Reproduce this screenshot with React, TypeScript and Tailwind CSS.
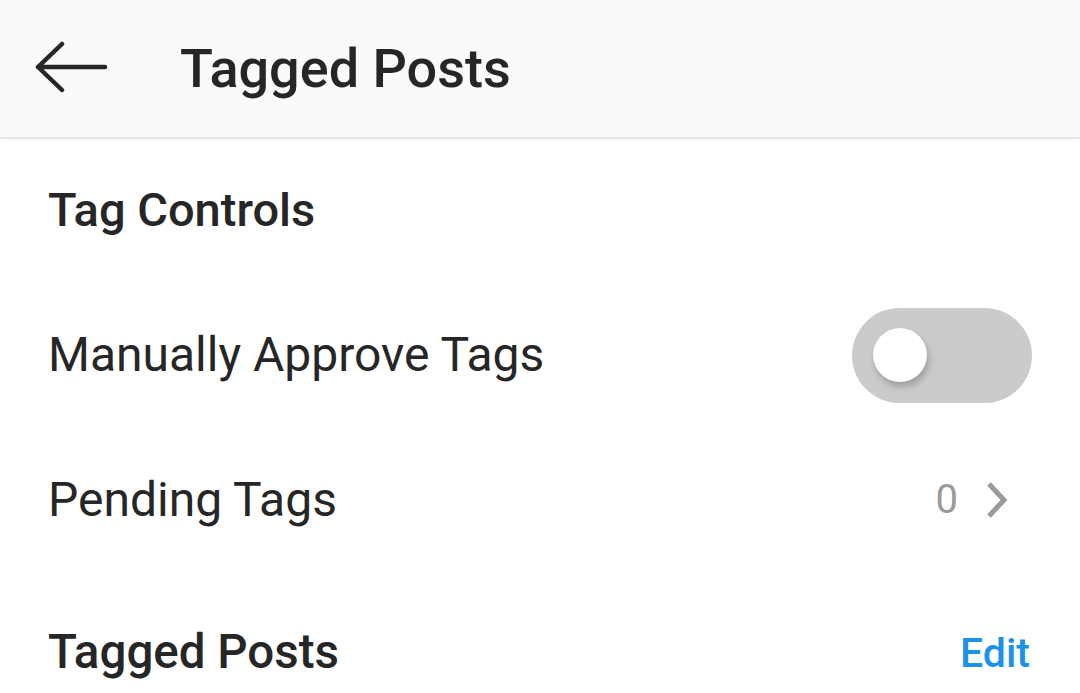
import React from "react";

export default function App() {
  const font = { fontFamily: "Roboto, 'Noto Sans', sans-serif" };
  return (
    <div className="w-[1080px] h-[693px] overflow-hidden bg-white text-[#262626]" style={font}>
      <div className="relative z-10 h-[138px] bg-[#fafafa] flex items-center shadow-[0_1px_3px_rgba(0,0,0,0.12)] border-b border-[#e0e0e0]">
        <div className="w-[180px] pl-[34px] flex items-center">
          <svg width="76" height="56" viewBox="0 0 76 56" fill="none">
            <path d="M71 26H4M28 3L4 26L28 49" stroke="#262626" strokeWidth="4.5" strokeLinecap="round" strokeLinejoin="round" />
          </svg>
        </div>
        <div className="text-[54px] font-medium leading-none">Tagged Posts</div>
      </div>
      <div className="flex flex-col">
        <div className="h-[143px] flex items-center pl-[48px] pr-[48px]">
          <span className="text-[47px] font-medium leading-none">Tag Controls</span>
        </div>
        <div className="h-[148px] flex items-center justify-between pl-[48px] pr-[48px]">
          <span className="text-[48px] leading-none">Manually Approve Tags</span>
          <div className="w-[180px] h-[95px] rounded-full bg-[#cacbcd] flex items-center pl-[21px]">
            <div className="w-[54px] h-[54px] rounded-full bg-white shadow-[2px_5px_7px_rgba(0,0,0,0.22)]" />
          </div>
        </div>
        <div className="h-[141px] flex items-center justify-between pl-[48px] pr-[71px]">
          <span className="text-[48px] leading-none">Pending Tags</span>
          <div className="flex items-center gap-[27px]">
            <span className="text-[40px] leading-none text-[#9a9a9a]">0</span>
            <svg width="24" height="38" viewBox="0 0 24 38" fill="none">
              <path d="M4 3L19 19L4 35" stroke="#999999" strokeWidth="5" strokeLinejoin="miter" />
            </svg>
          </div>
        </div>
        <div className="h-[166px] flex items-center justify-between pl-[48px] pr-[50px]">
          <span className="text-[47.5px] font-medium leading-none">Tagged Posts</span>
          <span className="text-[41px] font-medium leading-none text-[#1d92ea]">Edit</span>
        </div>
      </div>
    </div>
  );
}
